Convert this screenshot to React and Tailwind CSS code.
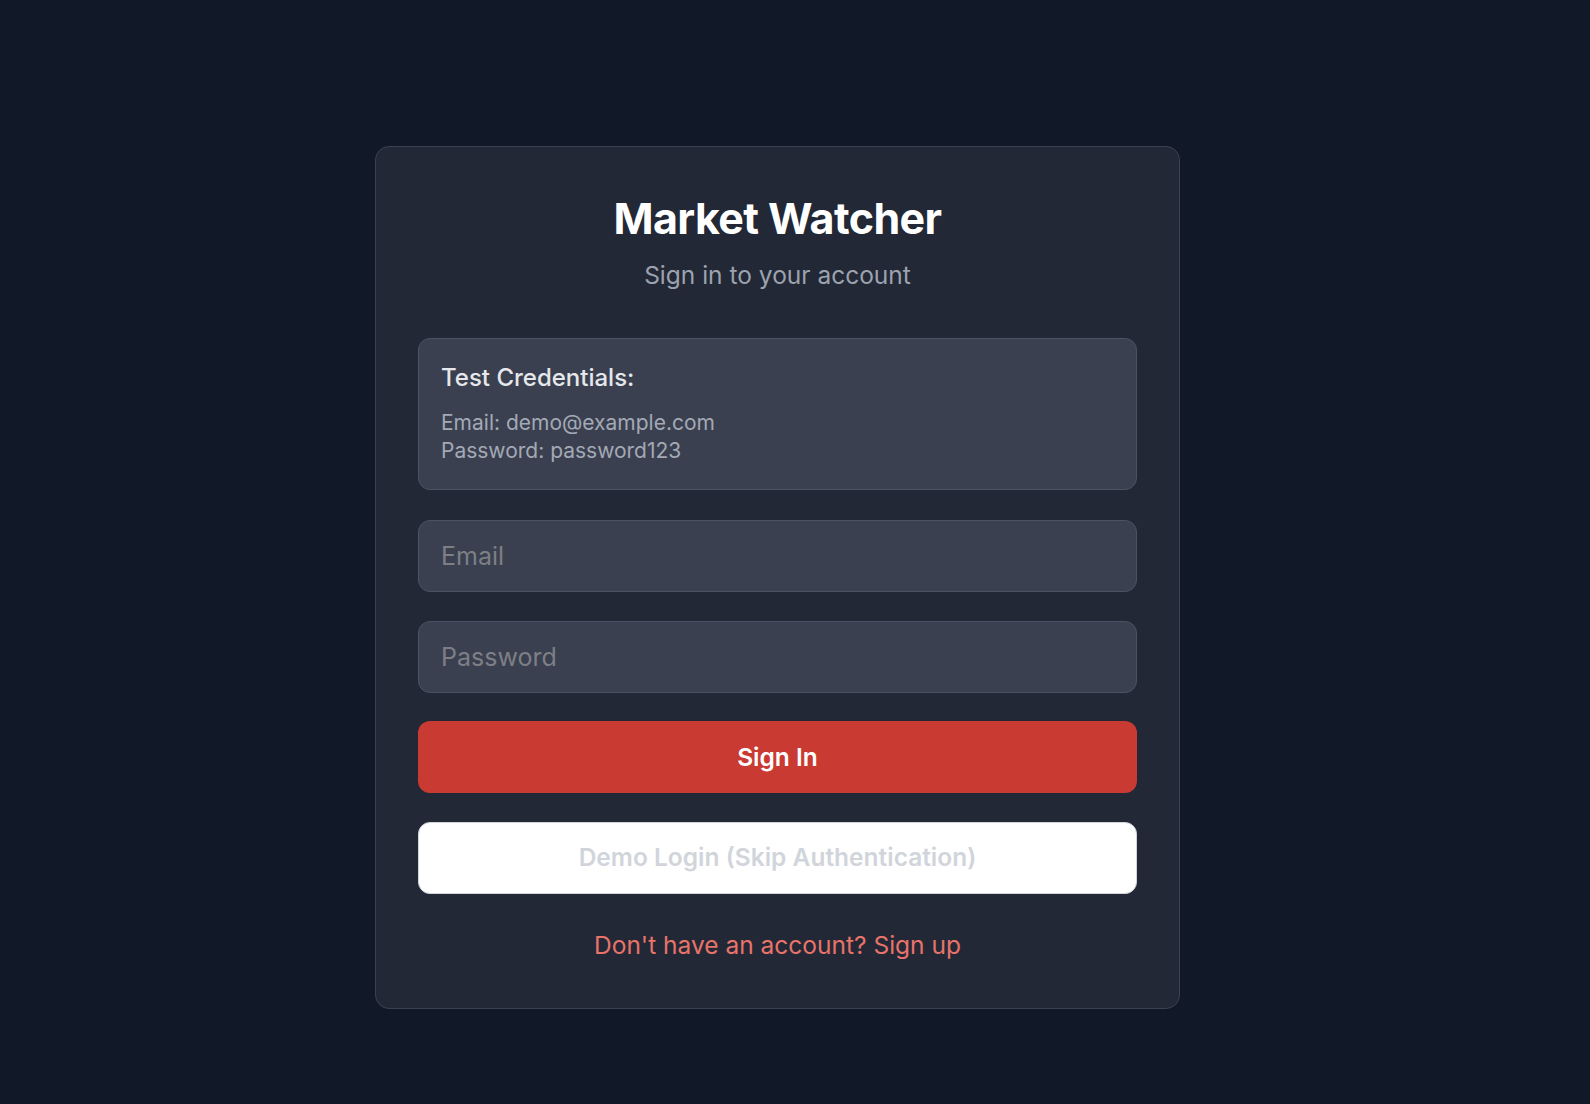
import React, { useState } from "react";

export default function App() {
  const [email, setEmail] = useState("");
  const [password, setPassword] = useState("");

  return (
    <div
      className="min-h-screen bg-[#111827] flex justify-center pt-[146px] pr-[35px]"
      style={{ fontFamily: "Inter, 'Noto Sans', sans-serif" }}
    >
      <div className="w-[805px] h-[863px] bg-[#222835] border border-[#3a4150] rounded-[14px] px-[42px] pt-[44px]">
        <h1 className="text-[43px] leading-[54px] font-bold text-white text-center tracking-[-0.6px]">
          Market Watcher
        </h1>
        <p className="mt-[13px] text-[24.5px] leading-[35px] text-[#9ca3af] text-center">
          Sign in to your account
        </p>

        <div className="mt-[45px] h-[152px] bg-[#3a4050] border border-[#4b5263] rounded-[12px] px-[22px] pt-[22px]">
          <h3 className="text-[24px] leading-[34px] font-medium text-[#e5e7eb]">
            Test Credentials:
          </h3>
          <div className="mt-[14px] text-[21px] leading-[28px] text-[#a3a9b5]">
            <p>Email: demo@example.com</p>
            <p>Password: password123</p>
          </div>
        </div>

        <form className="mt-[30px] flex flex-col gap-[28.5px]" onSubmit={(e) => e.preventDefault()}>
          <input
            type="email"
            placeholder="Email"
            value={email}
            onChange={(e) => setEmail(e.target.value)}
            className="h-[72px] w-full bg-[#3a4050] border border-[#4b5263] rounded-[12px] px-[22px] text-[25px] text-white placeholder:text-[#7d7f85] outline-none"
          />
          <input
            type="password"
            placeholder="Password"
            value={password}
            onChange={(e) => setPassword(e.target.value)}
            className="h-[72px] w-full bg-[#3a4050] border border-[#4b5263] rounded-[12px] px-[22px] text-[25px] text-white placeholder:text-[#7d7f85] outline-none"
          />
          <button
            type="submit"
            className="h-[72px] w-full bg-[#c93a32] rounded-[12px] text-[24.5px] font-semibold text-white"
          >
            Sign In
          </button>
          <button
            type="button"
            className="h-[72px] w-full bg-white border border-[#d1d5db] rounded-[12px] text-[24.5px] font-semibold text-[#d1d5db]"
          >
            Demo Login (Skip Authentication)
          </button>
        </form>

        <div className="mt-[34px] text-center">
          <a href="#" className="text-[24.5px] leading-[35px] text-[#e8736a]">
            Don't have an account? Sign up
          </a>
        </div>
      </div>
    </div>
  );
}
